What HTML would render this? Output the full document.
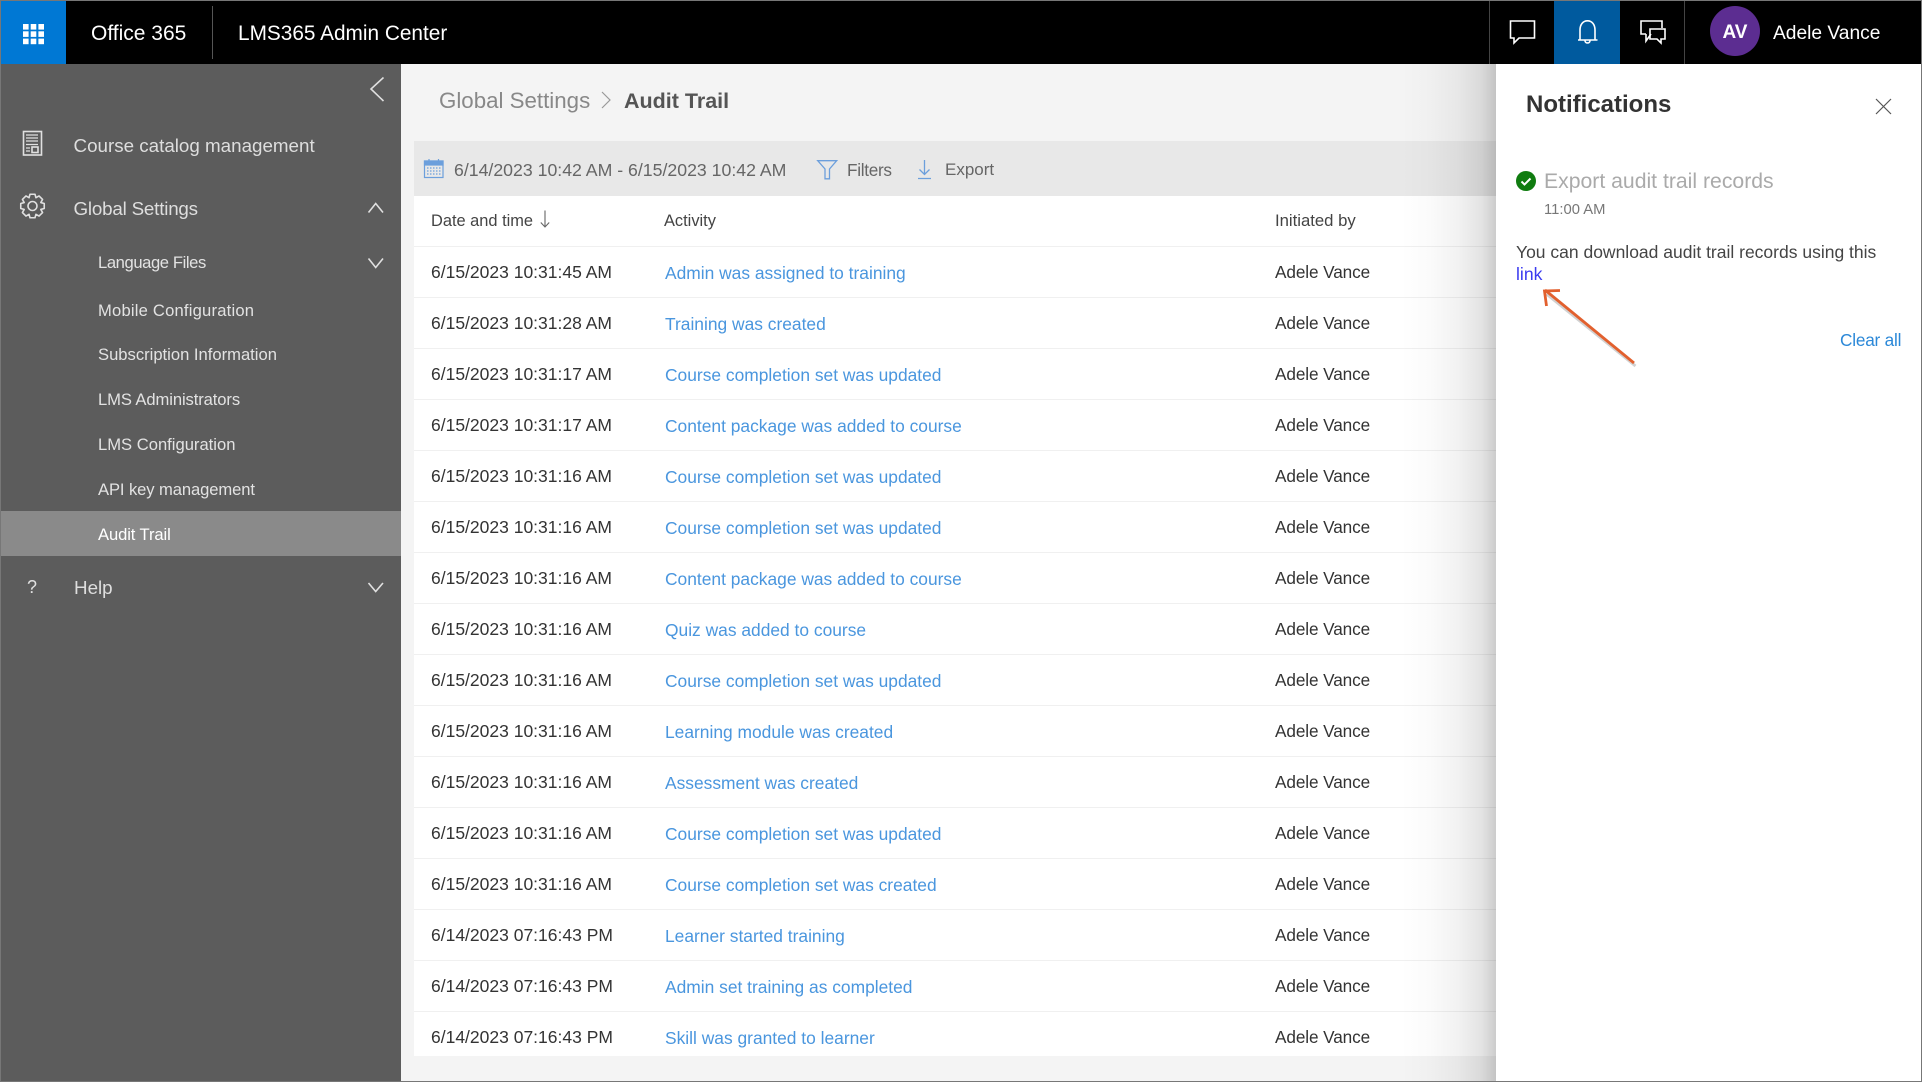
<!DOCTYPE html>
<html><head><meta charset="utf-8"><title>Audit Trail</title>
<style>
html,body{margin:0;padding:0;background:#777}
#p{position:relative;width:1922px;height:1082px;overflow:hidden;background:#f4f4f4;font-family:"Liberation Sans",Arial,sans-serif}
#p div,#p span.t,#p a{position:absolute;white-space:nowrap;line-height:24px}
svg{position:absolute;overflow:visible}
.b{left:0;background:#777}
.side{left:1px;top:64px;width:400px;height:1017px;background:#5c5c5c}
.m{color:#dedede;font-size:18.8px;left:73.500px}
.s{color:#e2e2e2;font-size:16.6px;letter-spacing:-.1px;left:98px}
.r0{left:414px;width:1082px;height:1px;background:#f0f0f0}
.d{left:431px;font-size:17.5px;color:#333}
.l{left:665px;font-size:17.4px;color:#4a96de;text-decoration:none}
.u{left:1275px;font-size:17.2px;letter-spacing:-.1px;color:#333}
</style></head><body><div id="p">
<div style="left:0;top:0;width:1922px;height:64px;background:#000"></div>
<div style="left:1px;top:1px;width:65px;height:63px;background:#0078d4"></div>
<svg style="left:0;top:0" width="70" height="64" fill="#fff"><rect x="23" y="24" width="5.600" height="5.600"/><rect x="30.700" y="24" width="5.600" height="5.600"/><rect x="38.400" y="24" width="5.600" height="5.600"/><rect x="23" y="31.300" width="5.600" height="5.600"/><rect x="30.700" y="31.300" width="5.600" height="5.600"/><rect x="38.400" y="31.300" width="5.600" height="5.600"/><rect x="23" y="38.600" width="5.600" height="5.600"/><rect x="30.700" y="38.600" width="5.600" height="5.600"/><rect x="38.400" y="38.600" width="5.600" height="5.600"/></svg>
<div style="left:91px;top:22px;font-size:21px;color:#fff">Office 365</div>
<div style="left:212px;top:6px;width:1px;height:53px;background:#555"></div>
<div style="left:238px;top:22px;font-size:20.8px;color:#fff">LMS365 Admin Center</div>
<div style="left:1489px;top:0;width:1px;height:64px;background:#444"></div>
<div style="left:1684px;top:0;width:1px;height:64px;background:#444"></div>
<div style="left:1554px;top:1px;width:66px;height:63px;background:#005a9e"></div>
<svg style="left:1490px;top:10px" width="200" height="50" fill="none" stroke="#fff" stroke-width="1.6"><path d="M20.500 11H44.500V28H29L24 33V28H20.500Z"/><path d="M90 30V20C90 14.500 93 10.800 97.500 10.800S105 14.500 105 20V30L107.500 30H88ZM95 30.500C95 33.800 100 33.800 100 30.500"/><path d="M156 24H151V11H172V18M156 24V31L161 24"/><path d="M160 19H175V29H171L171 33L167 29H160Z"/></svg>
<div style="left:1710px;top:6px;width:50px;height:50px;border-radius:50%;background:#5c2d91"></div>
<div style="left:1710px;top:21px;width:50px;text-align:center;font-size:19px;font-weight:bold;color:#fff">AV</div>
<div style="left:1773px;top:22px;font-size:19.200px;color:#fff">Adele Vance</div>

<div class="side"></div>
<svg style="left:0;top:64px" width="401" height="540" fill="none" stroke="#e0e0e0" stroke-width="1.600">
<path d="M383.500 13.500L371 25L383.500 37"/>
<rect x="23.500" y="67.500" width="18" height="23.500"/><path d="M26 71H38M26 74H38M26 77H38M26 80.500H38" stroke-width="1.200"/><path d="M26 84H30M26 87H30" stroke-width="1.200"/><rect x="32" y="83" width="6" height="5.500"/>
<g transform="translate(32.500 142)"><path d="M-2.500-11.740L2.500-11.740L3.440-8.310L6.530-10.070L10.070-6.530L8.310-3.440L11.740-2.500L11.740 2.500L8.310 3.440L10.070 6.530L6.530 10.070L3.440 8.310L2.500 11.740L-2.500 11.740L-3.440 8.310L-6.530 10.070L-10.070 6.530L-8.310 3.440L-11.740 2.500L-11.740-2.500L-8.310-3.440L-10.070-6.530L-6.530-10.070L-3.440-8.310Z" stroke-linejoin="round"/><circle r="4.500"/></g>
<path d="M368.500 148.500L375.700 139.500L383 148.500"/><path d="M368.500 194.500L375.700 203.500L383 194.500"/><path d="M368.500 519L375.700 527.500L383 519"/></svg>
<div class="m" style="top:134px;">Course catalog management</div>
<div class="m" style="top:197px;letter-spacing:-.2px">Global Settings</div>
<div class="s" style="top:251px;letter-spacing:-.4px">Language Files</div>
<div class="s" style="top:299px;letter-spacing:.2px">Mobile Configuration</div>
<div class="s" style="top:343px;letter-spacing:0">Subscription Information</div>
<div class="s" style="top:388px">LMS Administrators</div>
<div class="s" style="top:433px;letter-spacing:0">LMS Configuration</div>
<div class="s" style="top:478px">API key management</div>
<div style="left:1px;top:511px;width:400px;height:45px;background:#8a8a8a"></div>
<div class="s" style="top:523px;color:#fff">Audit Trail</div>
<div style="left:27px;top:575px;font-size:18px;color:#e0e0e0">?</div>
<div class="m" style="top:576px;left:74px">Help</div>

<div style="left:439px;top:89px;font-size:22.300px;color:#888">Global Settings</div>
<svg style="left:600px;top:90px" width="14" height="20" fill="none" stroke="#999" stroke-width="1.200"><path d="M2 2L10 10L2 18"/></svg>
<div style="left:624px;top:89px;font-size:21.500px;font-weight:bold;letter-spacing:0;color:#555">Audit Trail</div>

<div style="left:414px;top:141px;width:1082px;height:55px;background:#e8e8e8"></div>
<svg style="left:424px;top:159px" width="20" height="20" fill="none" stroke="#6c9fdc" stroke-width="1.200"><rect x=".5" y="2" width="18.500" height="16.500"/><rect x=".5" y="2" width="18.500" height="4" fill="#6c9fdc"/><path d="M5 0V3M14.500 0V3"/><path d="M3 9H16.500M3 12H16.500M3 15H16.500" stroke-dasharray="1.500 1.500"/></svg>
<div style="left:454px;top:158px;font-size:17.700px;color:#666">6/14/2023 10:42 AM - 6/15/2023 10:42 AM</div>
<svg style="left:817px;top:160px" width="21" height="20" fill="none" stroke="#6c9fdc" stroke-width="1.300"><path d="M.7.7H19.700L12.500 9V18.800L8 18.800V9Z"/></svg>
<div style="left:847px;top:158px;font-size:17.200px;letter-spacing:-.3px;color:#666">Filters</div>
<svg style="left:917px;top:160px" width="16" height="20" fill="none" stroke="#6c9fdc" stroke-width="1.300"><path d="M7.500 0V14M2.500 9.500L7.500 14.500L12.500 9.500M1 18.500H14"/></svg>
<div style="left:945px;top:158px;font-size:17px;color:#666">Export</div>

<div style="left:414px;top:196px;width:1082px;height:860px;background:#fff"></div>
<div style="left:431px;top:209px;font-size:16.400px;color:#444">Date and time</div>
<svg style="left:540px;top:210px" width="10" height="18" fill="none" stroke="#666" stroke-width="1.100"><path d="M5 .5V16.500M.8 12.500L5 17L9.200 12.500"/></svg>
<div style="left:664px;top:209px;font-size:16.400px;color:#444">Activity</div>
<div style="left:1275px;top:209px;font-size:16.700px;color:#444">Initiated by</div>

<div class="r0" style="top:246px"></div><div class="r0" style="top:297px"></div><div class="r0" style="top:348px"></div><div class="r0" style="top:399px"></div><div class="r0" style="top:450px"></div><div class="r0" style="top:501px"></div><div class="r0" style="top:552px"></div><div class="r0" style="top:603px"></div><div class="r0" style="top:654px"></div><div class="r0" style="top:705px"></div><div class="r0" style="top:756px"></div><div class="r0" style="top:807px"></div><div class="r0" style="top:858px"></div><div class="r0" style="top:909px"></div><div class="r0" style="top:960px"></div><div class="r0" style="top:1011px"></div>

<div class="d" style="top:260px">6/15/2023 10:31:45 AM</div><a class="l" style="top:261px">Admin was assigned to training</a><div class="u" style="top:260px">Adele Vance</div>
<div class="d" style="top:311px">6/15/2023 10:31:28 AM</div><a class="l" style="top:312px">Training was created</a><div class="u" style="top:311px">Adele Vance</div>
<div class="d" style="top:362px">6/15/2023 10:31:17 AM</div><a class="l" style="top:363px">Course completion set was updated</a><div class="u" style="top:362px">Adele Vance</div>
<div class="d" style="top:413px">6/15/2023 10:31:17 AM</div><a class="l" style="top:414px">Content package was added to course</a><div class="u" style="top:413px">Adele Vance</div>
<div class="d" style="top:464px">6/15/2023 10:31:16 AM</div><a class="l" style="top:465px">Course completion set was updated</a><div class="u" style="top:464px">Adele Vance</div>
<div class="d" style="top:515px">6/15/2023 10:31:16 AM</div><a class="l" style="top:516px">Course completion set was updated</a><div class="u" style="top:515px">Adele Vance</div>
<div class="d" style="top:566px">6/15/2023 10:31:16 AM</div><a class="l" style="top:567px">Content package was added to course</a><div class="u" style="top:566px">Adele Vance</div>
<div class="d" style="top:617px">6/15/2023 10:31:16 AM</div><a class="l" style="top:618px">Quiz was added to course</a><div class="u" style="top:617px">Adele Vance</div>
<div class="d" style="top:668px">6/15/2023 10:31:16 AM</div><a class="l" style="top:669px">Course completion set was updated</a><div class="u" style="top:668px">Adele Vance</div>
<div class="d" style="top:719px">6/15/2023 10:31:16 AM</div><a class="l" style="top:720px">Learning module was created</a><div class="u" style="top:719px">Adele Vance</div>
<div class="d" style="top:770px">6/15/2023 10:31:16 AM</div><a class="l" style="top:771px">Assessment was created</a><div class="u" style="top:770px">Adele Vance</div>
<div class="d" style="top:821px">6/15/2023 10:31:16 AM</div><a class="l" style="top:822px">Course completion set was updated</a><div class="u" style="top:821px">Adele Vance</div>
<div class="d" style="top:872px">6/15/2023 10:31:16 AM</div><a class="l" style="top:873px">Course completion set was created</a><div class="u" style="top:872px">Adele Vance</div>
<div class="d" style="top:923px">6/14/2023 07:16:43 PM</div><a class="l" style="top:924px">Learner started training</a><div class="u" style="top:923px">Adele Vance</div>
<div class="d" style="top:974px">6/14/2023 07:16:43 PM</div><a class="l" style="top:975px">Admin set training as completed</a><div class="u" style="top:974px">Adele Vance</div>
<div class="d" style="top:1025px">6/14/2023 07:16:43 PM</div><a class="l" style="top:1026px">Skill was granted to learner</a><div class="u" style="top:1025px">Adele Vance</div>

<div style="left:1400px;top:64px;width:96px;height:1017px;background:linear-gradient(to right,rgba(0,0,0,0),rgba(0,0,0,.015) 30%,rgba(0,0,0,.05) 60%,rgba(0,0,0,.11) 85%,rgba(0,0,0,.2))"></div>
<div style="left:1496px;top:64px;width:425px;height:1017px;background:#fff"></div>
<div style="left:1526px;top:93px;font-size:24px;font-weight:bold;letter-spacing:0;color:#333">Notifications</div>
<svg style="left:1875px;top:98px" width="17" height="17" fill="none" stroke="#555" stroke-width="1.200"><path d="M1 1L16 16M16 1L1 16"/></svg>
<svg style="left:1516px;top:171px" width="20" height="20"><circle cx="10" cy="10" r="10" fill="#107c10"/><path d="M5.500 10.500L8.500 13.500L14.500 7.500" fill="none" stroke="#fff" stroke-width="2"/></svg>
<div style="left:1544px;top:170px;font-size:21.200px;color:#aaa">Export audit trail records</div>
<div style="left:1544px;top:198px;font-size:14.800px;color:#777">11:00 AM</div>
<div style="left:1516px;top:240px;font-size:17.500px;color:#444">You can download audit trail records using this</div>
<div style="left:1516px;top:262px;font-size:17.600px;color:#3a3af0">link</div>
<div style="left:1840px;top:328px;font-size:17.200px;letter-spacing:-.2px;color:#2b88d8">Clear all</div>
<svg style="left:1530px;top:280px" width="120" height="95" fill="none"><g stroke="#000" stroke-opacity=".18" stroke-width="3" transform="translate(1.500 3)"><path d="M104 83L15 11"/></g><path d="M104 83L15 10M30 10.500L14.500 11L16.500 26" stroke="#e2602e" stroke-width="2.800"/></svg>

<div class="b" style="top:0;width:1922px;height:1px"></div>
<div class="b" style="top:1081px;width:1922px;height:1px"></div>
<div class="b" style="top:0;width:1px;height:1082px"></div>
<div style="left:1921px;top:0;width:1px;height:1082px;background:#777"></div>
</div></body></html>
